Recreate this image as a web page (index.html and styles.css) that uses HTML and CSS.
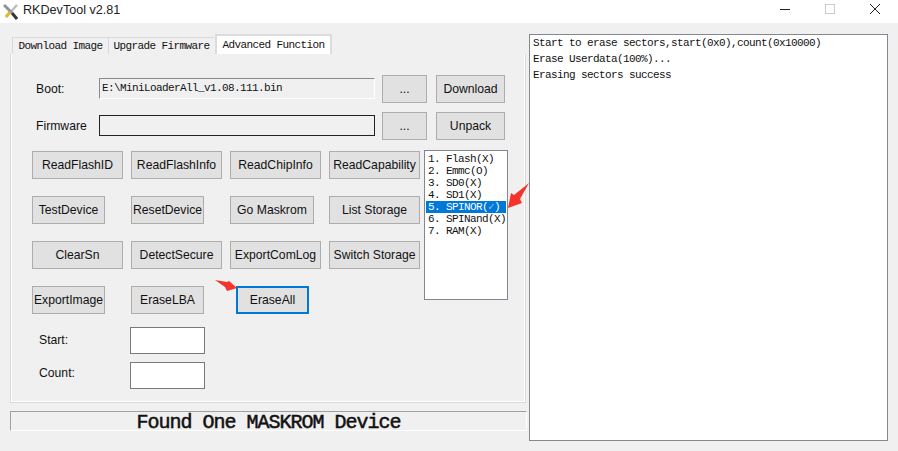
FILE: index.html
```html
<!DOCTYPE html>
<html lang="en">
<head>
    <meta charset="UTF-8">
    <meta name="viewport" content="width=device-width, initial-scale=1.0">
    <title>RKDevTool v2.81</title>
    <link rel="stylesheet" href="styles.css">
</head>
<body>
    <div class="titlebar">
        <svg class="app-icon" width="15" height="16" viewBox="0 0 15 16">
            <path d="M14 1 L3 13" stroke="#b8bcc0" stroke-width="2.5"/>
            <path d="M1 1 L9 9" stroke="#8f9499" stroke-width="3"/>
            <path d="M9 9 L14 15" stroke="#33373b" stroke-width="3"/>
            <path d="M7 8 L3 13" stroke="#e0b92e" stroke-width="3"/>
        </svg>
        <span class="title-text">RKDevTool v2.81</span>
        <div class="win-controls">
            <svg width="12" height="12" viewBox="0 0 12 12"><path d="M1 6.5 H11" stroke="#222" stroke-width="1"/></svg>
            <svg width="12" height="12" viewBox="0 0 12 12"><rect x="1.5" y="1.5" width="9" height="9" fill="none" stroke="#ccc"/></svg>
            <svg width="12" height="12" viewBox="0 0 12 12"><path d="M1 1 L11 11 M11 1 L1 11" stroke="#222" stroke-width="1"/></svg>
        </div>
    </div>

    <div class="main">
        <div class="left">
            <div class="tabs">
                <div class="tab">Download Image</div>
                <div class="tab">Upgrade Firmware</div>
                <div class="tab active">Advanced Function</div>
            </div>
            <div class="panel">
                <div class="file-row">
                    <span class="file-label">Boot:</span>
                    <div class="path-box readonly">E:\MiniLoaderAll_v1.08.111.bin</div>
                    <button class="btn dots">...</button>
                    <button class="btn side">Download</button>
                </div>
                <div class="file-row">
                    <span class="file-label">Firmware</span>
                    <div class="path-box"></div>
                    <button class="btn dots">...</button>
                    <button class="btn side">Unpack</button>
                </div>

                <div class="tools">
                    <div class="tool-grid">
                        <button class="btn wide">ReadFlashID</button>
                        <button class="btn wide">ReadFlashInfo</button>
                        <button class="btn wide">ReadChipInfo</button>
                        <button class="btn wide">ReadCapability</button>
                        <button class="btn small">TestDevice</button>
                        <button class="btn small">ResetDevice</button>
                        <button class="btn mid">Go Maskrom</button>
                        <button class="btn wide">List Storage</button>
                        <button class="btn wide">ClearSn</button>
                        <button class="btn wide">DetectSecure</button>
                        <button class="btn wide">ExportComLog</button>
                        <button class="btn wide">Switch Storage</button>
                        <button class="btn small">ExportImage</button>
                        <button class="btn small">EraseLBA</button>
                        <button class="btn small focused">EraseAll</button>
                    </div>
                    <ul class="storage-list">
                        <li>1. Flash(X)</li>
                        <li>2. Emmc(O)</li>
                        <li>3. SD0(X)</li>
                        <li>4. SD1(X)</li>
                        <li class="selected">5. SPINOR(<span class="tick">✓</span>)</li>
                        <li>6. SPINand(X)</li>
                        <li>7. RAM(X)</li>
                    </ul>
                </div>

                <div class="range-row start-row">
                    <span class="range-label">Start:</span>
                    <div class="range-box"></div>
                </div>
                <div class="range-row count-row">
                    <span class="range-label">Count:</span>
                    <div class="range-box"></div>
                </div>
            </div>
            <div class="status">Found One MASKROM Device</div>
        </div>
        <div class="log">
            <div>Start to erase sectors,start(0x0),count(0x10000)</div>
            <div>Erase Userdata(100%)...</div>
            <div>Erasing sectors success</div>
        </div>
    </div>

    <svg class="arrow arrow-list" width="24" height="27" viewBox="0 0 24 27">
        <path d="M24 0 L15 16 L17 20 L3 25 L6 10 L9 12 Z" fill="#f5332a"/>
    </svg>
    <svg class="arrow arrow-erase" width="24" height="13" viewBox="0 0 24 13">
        <path d="M1 1 L13 3 L15 2 L23 9 L13 12 L11 8 Z" fill="#f5332a"/>
    </svg>
</body>
</html>
```

FILE: styles.css
```css
* {
    box-sizing: border-box;
}

body {
    margin: 0;
    width: 898px;
    height: 451px;
    overflow: hidden;
    position: relative;
    background-color: #f0f0f0;
    font-family: "Liberation Sans", Arial, sans-serif;
    font-size: 12.2px;
    color: #111;
}

.titlebar {
    height: 23px;
    background-color: #fff;
    display: flex;
    align-items: center;
    padding-left: 3px;
}

.app-icon {
    margin-right: 5px;
}

.title-text {
    font-size: 12.6px;
    color: #222;
    margin-top: -4px;
}

.win-controls {
    margin-left: auto;
    display: flex;
    gap: 33px;
    padding-right: 17px;
    margin-top: -5px;
}

.main {
    display: flex;
    padding: 11px 10px 0 10px;
}

.left {
    width: 517px;
    margin-right: 2px;
}

.tabs {
    display: flex;
    align-items: flex-end;
    height: 20px;
    padding-left: 2px;
}

.tab {
    height: 17px;
    padding-top: 2px;
    width: 96px;
    border: 1px solid #d9d9d9;
    border-bottom: none;
    border-right: none;
    font-family: "Liberation Mono", monospace;
    font-size: 11px;
    letter-spacing: -0.6px;
    text-align: center;
    white-space: nowrap;
}

.tab:nth-child(2) {
    width: 106px;
}

.tab.active {
    height: 20px;
    width: 117px;
    padding-top: 3px;
    background-color: #fff;
    border: 2px solid #dcdcdc;
    border-bottom: none;
    margin-left: 1px;
}

.panel {
    width: 516px;
    height: 349px;
    border: 1px solid #d9d9d9;
    border-top: none;
    box-shadow: inset 1px 0 0 #fff, inset -1px 0 0 #fff, inset 0 -1px 0 #fff;
    padding: 21px 20px 0 21px;
}

.file-row {
    display: flex;
    align-items: center;
    height: 27px;
    margin-bottom: 10px;
}

.file-label {
    width: 67px;
    padding-left: 4px;
    flex: none;
}

.path-box {
    width: 276px;
    height: 21px;
    flex: none;
    border: 1px solid #222;
    font-family: "Liberation Mono", monospace;
    font-size: 11px;
    letter-spacing: -0.6px;
    padding: 3px 0 0 2px;
    margin-right: 7px;
}

.path-box.readonly {
    border-color: #8a8a8a #fff #fff #8a8a8a;
}

.btn {
    height: 28px;
    padding: 0;
    border: 1px solid #adadad;
    background-color: #e1e1e1;
    font-family: "Liberation Sans", Arial, sans-serif;
    font-size: 12.2px;
    color: #111;
    white-space: nowrap;
    flex: none;
}

.dots {
    width: 45px;
    margin-right: 9px;
}

.side {
    width: 69px;
}

.tools {
    display: flex;
    align-items: flex-start;
    margin-top: 11px;
}

.tool-grid {
    width: 392px;
    flex: none;
    display: grid;
    grid-template-columns: repeat(4, 99px);
    row-gap: 17px;
    justify-items: start;
    margin-top: 1px;
}

.wide {
    width: 91px;
}

.small {
    width: 73px;
}

.mid {
    width: 84px;
}

.focused {
    margin-left: 6px;
    border: 2px solid #0078d7;
}

.storage-list {
    list-style: none;
    margin: 0;
    padding: 2px 1px;
    width: 87px;
    height: 150px;
    background-color: #fff;
    border: 1px solid #828790;
    font-family: "Liberation Mono", monospace;
    font-size: 11px;
    letter-spacing: -0.6px;
}

.storage-list li {
    height: 12px;
    line-height: 12px;
    padding-left: 2px;
    white-space: nowrap;
}

.storage-list .selected {
    background-color: #0078d7;
    color: #fff;
}

.tick {
    color: #8fc4ee;
}

.range-row {
    display: flex;
    align-items: center;
    height: 27px;
}

.start-row {
    margin-top: 13px;
    margin-bottom: 8px;
}

.range-label {
    width: 98px;
    padding-left: 7px;
    margin-top: -1px;
}

.count-row .range-label {
    margin-top: -5px;
}

.range-box {
    width: 75px;
    height: 27px;
    border: 1px solid #7a7a7a;
    background-color: #fff;
}

.status {
    margin-top: 8px;
    height: 20px;
    width: 517px;
    border-top: 1px solid #a0a0a0;
    border-left: 1px solid #a0a0a0;
    border-bottom: 1px solid #fff;
    border-right: 1px solid #fff;
    text-align: center;
    font-family: "Liberation Mono", monospace;
    font-size: 20px;
    letter-spacing: -1px;
    line-height: 22px;
    -webkit-text-stroke: 0.5px #111;
    color: #111;
}

.log {
    width: 359px;
    height: 407px;
    background-color: #fff;
    border: 1px solid #828790;
    padding: 0 3px;
    font-family: "Liberation Mono", monospace;
    font-size: 11px;
    letter-spacing: -0.6px;
    line-height: 16px;
    white-space: nowrap;
}

.arrow {
    position: absolute;
}

.arrow-list {
    left: 505px;
    top: 183px;
}

.arrow-erase {
    left: 214px;
    top: 279px;
}
```
